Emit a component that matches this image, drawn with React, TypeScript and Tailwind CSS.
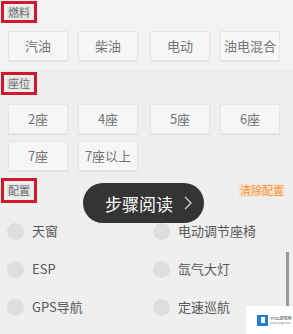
import React from "react";

const font = { fontFamily: '"Noto Sans CJK SC", "Noto Sans", sans-serif' };

function Label({ text, className = "" }: { text: string; className?: string }) {
  return (
    <div className={"ml-[1px] flex w-fit items-center border-[3px] border-[#d3172c] px-[3px] " + className}>
      <span className="bg-[#e4e4e4] px-[1px] text-[11px] leading-[13px] text-[#6b6b6b]">{text}</span>
    </div>
  );
}

function Btn({ text }: { text: string }) {
  return (
    <div className="flex h-[30px] w-[60px] items-center justify-center border border-[#e6e6e6] bg-[#f6f6f6] text-[13px] text-[#757575] shadow-[0_1px_1px_rgba(0,0,0,0.05)]">
      {text}
    </div>
  );
}

function Check({ text }: { text: string }) {
  return (
    <div className="flex items-center">
      <div className="h-[17px] w-[17px] rounded-full bg-[#dedede]" />
      <span className="ml-[8px] text-[13px] text-[#585858]">{text}</span>
    </div>
  );
}

export default function App() {
  return (
    <div className="relative h-[334px] w-[293px] overflow-hidden bg-[#efefef]" style={font}>
      <div className="bg-[#f2f2f2] pt-[1px] pb-[9px]">
        <Label text="燃料" className="h-[22px]" />
        <div className="mt-[8px] flex gap-[10px] pl-[8px]">
          <Btn text="汽油" />
          <Btn text="柴油" />
          <div className="ml-[2px]"><Btn text="电动" /></div>
          <Btn text="油电混合" />
        </div>
      </div>
      <div className="border-t border-[#e6e6e6] pt-[1px]">
        <Label text="座位" className="h-[23px]" />
        <div className="mt-[9px] flex gap-[10px] pl-[8px]">
          <Btn text="2座" />
          <Btn text="4座" />
          <div className="ml-[2px]"><Btn text="5座" /></div>
          <Btn text="6座" />
        </div>
        <div className="mt-[7px] flex gap-[10px] pl-[8px]">
          <Btn text="7座" />
          <Btn text="7座以上" />
        </div>
      </div>
      <div className="mt-[7px] flex items-center justify-between pr-[8px]">
        <Label text="配置" className="h-[25px]" />
        <span className="bg-[#f7e3cf] px-[1px] text-[11px] leading-[13px] text-[#ee9a45]">清除配置</span>
      </div>
      <div className="mt-[9px] grid grid-cols-2 pl-[7px]">
        <div className="flex h-[38px] items-center"><Check text="天窗" /></div>
        <div className="flex h-[38px] items-center pl-[3px]"><Check text="电动调节座椅" /></div>
        <div className="flex h-[38px] items-center"><Check text="ESP" /></div>
        <div className="flex h-[38px] items-center pl-[3px]"><Check text="氙气大灯" /></div>
        <div className="flex h-[38px] items-center"><Check text="GPS导航" /></div>
        <div className="flex h-[38px] items-center pl-[3px]"><Check text="定速巡航" /></div>
      </div>

      <div className="absolute left-[83px] top-[183px] flex h-[40px] w-[121px] items-center rounded-full bg-[#343434] pl-[22px]">
        <span className="text-[17px] leading-none text-white">步骤阅读</span>
        <svg className="ml-[10px]" width="10" height="16" viewBox="0 0 10 16">
          <path d="M2 2 L8 8 L2 14" fill="none" stroke="#cfcfcf" strokeWidth="1.4" />
        </svg>
      </div>

      <div className="absolute left-[286px] top-[252px] h-[54px] w-[3px] bg-[#9a9a9a]" />

      <div className="absolute left-[246px] top-[306px] flex h-[28px] w-[47px] items-center bg-white pl-[11px]">
        <div className="flex h-[11px] w-[11px] items-center justify-center bg-[#1f7ed8]">
          <div className="h-[6px] w-[4px] bg-white" />
        </div>
        <div className="ml-[2px] flex flex-col">
          <span className="text-[4px] leading-[5px] text-[#333]">TYSG游戏网</span>
          <span className="text-[3px] leading-[4px] text-[#888]">www.tysg.com</span>
        </div>
      </div>
    </div>
  );
}
